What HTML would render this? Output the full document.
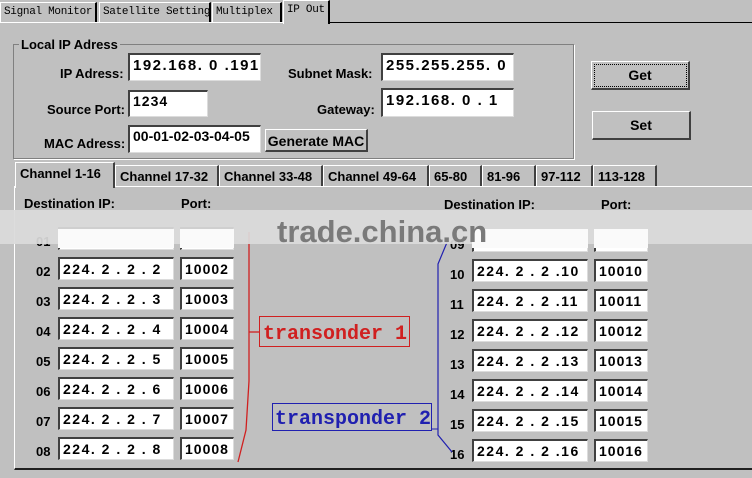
<!DOCTYPE html>
<html><head><meta charset="utf-8"><style>
*{margin:0;padding:0;box-sizing:border-box}
body{width:752px;height:478px;background:#c0c0c0;position:relative;overflow:hidden;font-family:"Liberation Sans",Arial,sans-serif;font-size:13px;font-weight:bold;color:#000}
.a{position:absolute;white-space:nowrap}
.tab{position:absolute;top:2px;height:20px;border:1px solid #fff;border-right:2px solid #000;border-bottom:none;font-family:"Liberation Mono",monospace;font-weight:normal;font-size:11px;padding:3px 0 0 3px;letter-spacing:-0.3px;white-space:nowrap;overflow:hidden}
.box{position:absolute;background:#fff;border-top:2px solid #404040;border-left:2px solid #404040;border-right:1px solid #dcdcdc;border-bottom:1px solid #dcdcdc;font-size:14px;padding:2px 0 0 3px;white-space:pre;font-weight:bold;letter-spacing:1.5px}
.pt{letter-spacing:1px}
.lbl{position:absolute;font-size:13px}
.btn{position:absolute;border:1px solid #fff;border-right:2px solid #404040;border-bottom:2px solid #404040;text-align:center;font-size:14px;padding-top:5px}
.ct{position:absolute;top:165px;height:22px;border-top:1px solid #fff;border-left:1px solid #fff;border-right:2px solid #404040;font-size:13px;padding:3px 0 0 4px}
</style></head><body>
<div class="tab" style="left:0;width:97px">Signal Monitor</div>
<div class="tab" style="left:99px;width:112px">Satellite Setting</div>
<div class="tab" style="left:212px;width:70px">Multiplex</div>
<div class="tab" style="left:283px;width:47px;top:0;height:24px;background:#c0c0c0">IP Out</div>
<div class="a" style="left:0;top:22px;width:283px;height:1px;background:#fff"></div>
<div class="a" style="left:330px;top:22px;width:422px;height:1px;background:#000"></div>

<div class="a" style="left:13px;top:44px;width:561px;height:115px;border:1px solid #808080;box-shadow:1px 1px 0 #fff"></div>
<div class="a" style="left:19px;top:37px;background:#c0c0c0;padding:0 2px;font-size:13px">Local IP Adress</div>
<div class="lbl" style="left:60px;top:66px">IP Adress:</div>
<div class="box" style="left:128px;top:53px;width:133px;height:28px;font-size:15px">192.168. 0 .191</div>
<div class="lbl" style="left:47px;top:102px">Source Port:</div>
<div class="box pt" style="left:128px;top:90px;width:80px;height:27px;padding-top:1px">1234</div>
<div class="lbl" style="left:44px;top:136px">MAC Adress:</div>
<div class="box" style="left:128px;top:125px;width:133px;height:28px;padding-top:1px;letter-spacing:0">00-01-02-03-04-05</div>
<div class="btn" style="left:265px;top:129px;width:103px;height:23px;padding-top:3px">Generate MAC</div>
<div class="lbl" style="left:288px;top:66px">Subnet Mask:</div>
<div class="box" style="left:381px;top:53px;width:133px;height:28px;font-size:15px">255.255.255. 0</div>
<div class="lbl" style="left:317px;top:102px">Gateway:</div>
<div class="box" style="left:381px;top:88px;width:133px;height:29px;font-size:15px">192.168. 0 . 1</div>
<div class="btn" style="left:591px;top:61px;width:99px;height:29px;outline:1px dotted #000;outline-offset:-4px">Get</div>
<div class="btn" style="left:592px;top:111px;width:99px;height:29px">Set</div>

<div class="a" style="left:14px;top:186px;width:740px;height:284px;border-left:1px solid #fff;border-top:1px solid #fff;border-bottom:2px solid #202020"></div>
<div class="ct" style="left:15px;top:162px;height:26px;width:100px;background:#c0c0c0;font-size:13px">Channel 1-16</div>
<div class="ct" style="left:115px;width:104px">Channel 17-32</div>
<div class="ct" style="left:219px;width:104px">Channel 33-48</div>
<div class="ct" style="left:323px;width:106px">Channel 49-64</div>
<div class="ct" style="left:429px;width:53px">65-80</div>
<div class="ct" style="left:482px;width:54px">81-96</div>
<div class="ct" style="left:536px;width:57px">97-112</div>
<div class="ct" style="left:593px;width:64px">113-128</div>
<div class="a" style="left:115px;top:186px;width:637px;height:1px;background:#fff"></div>

<div class="lbl" style="left:24px;top:196px">Destination IP:</div>
<div class="lbl" style="left:181px;top:196px">Port:</div>
<div class="lbl" style="left:444px;top:197px">Destination IP:</div>
<div class="lbl" style="left:601px;top:197px">Port:</div>

<div id="rows"></div>
<script>
var h='';
for(var i=1;i<=8;i++){var y=257+30*(i-2);var n=('0'+i);
h+='<div class="lbl" style="left:36px;top:'+(y+7)+'px">'+n+'</div><div class="box" style="left:58px;top:'+y+'px;width:116px;height:23px">224. 2 . 2 . '+i+'</div><div class="box pt" style="left:180px;top:'+y+'px;width:54px;height:23px">1000'+i+'</div>';}
for(var i=9;i<=16;i++){var y=259+30*(i-10);
h+='<div class="lbl" style="left:450px;top:'+(y+8)+'px">'+(i<10?'0'+i:i)+'</div><div class="box" style="left:472px;top:'+y+'px;width:116px;height:23px">224. 2 . 2 .'+(i<10?' '+i:i)+'</div><div class="box pt" style="left:594px;top:'+y+'px;width:54px;height:23px">'+(10000+i)+'</div>';}
document.getElementById('rows').innerHTML=h;
</script>

<svg class="a" style="left:0;top:0" width="752" height="478">
<polyline points="249,232 249,381 246,430 238,462" fill="none" stroke="#d02020" stroke-width="1.3"/>
<line x1="249" y1="332" x2="260" y2="332" stroke="#d02020" stroke-width="1.3"/>
<rect x="259.5" y="316.5" width="150" height="30" fill="none" stroke="#d02020"/>
<polyline points="448,240 438,264 438,435 452,452" fill="none" stroke="#2020b0" stroke-width="1.2"/>
<line x1="431" y1="429" x2="438" y2="429" stroke="#2020b0"/>
<rect x="272.5" y="403.5" width="159" height="27" fill="none" stroke="#2020b0"/>
<text x="263" y="339" font-family="Liberation Mono,monospace" font-size="20" fill="#d02020">transonder 1</text>
<text x="275" y="424" font-family="Liberation Mono,monospace" font-size="20" fill="#2020b0">transponder 2</text>
<rect x="0" y="210" width="752" height="34" fill="#dadada" opacity="0.93"/>
<rect x="58" y="229" width="116" height="19" fill="#fafafa"/>
<rect x="180" y="229" width="54" height="19" fill="#fafafa"/>
<rect x="472" y="229" width="116" height="19" fill="#fafafa"/>
<rect x="594" y="229" width="54" height="19" fill="#fafafa"/>
<text x="277" y="242" font-family="Liberation Sans,Arial,sans-serif" font-size="31" fill="#7a7a7a">trade.china.cn</text>
</svg>
</body></html>
